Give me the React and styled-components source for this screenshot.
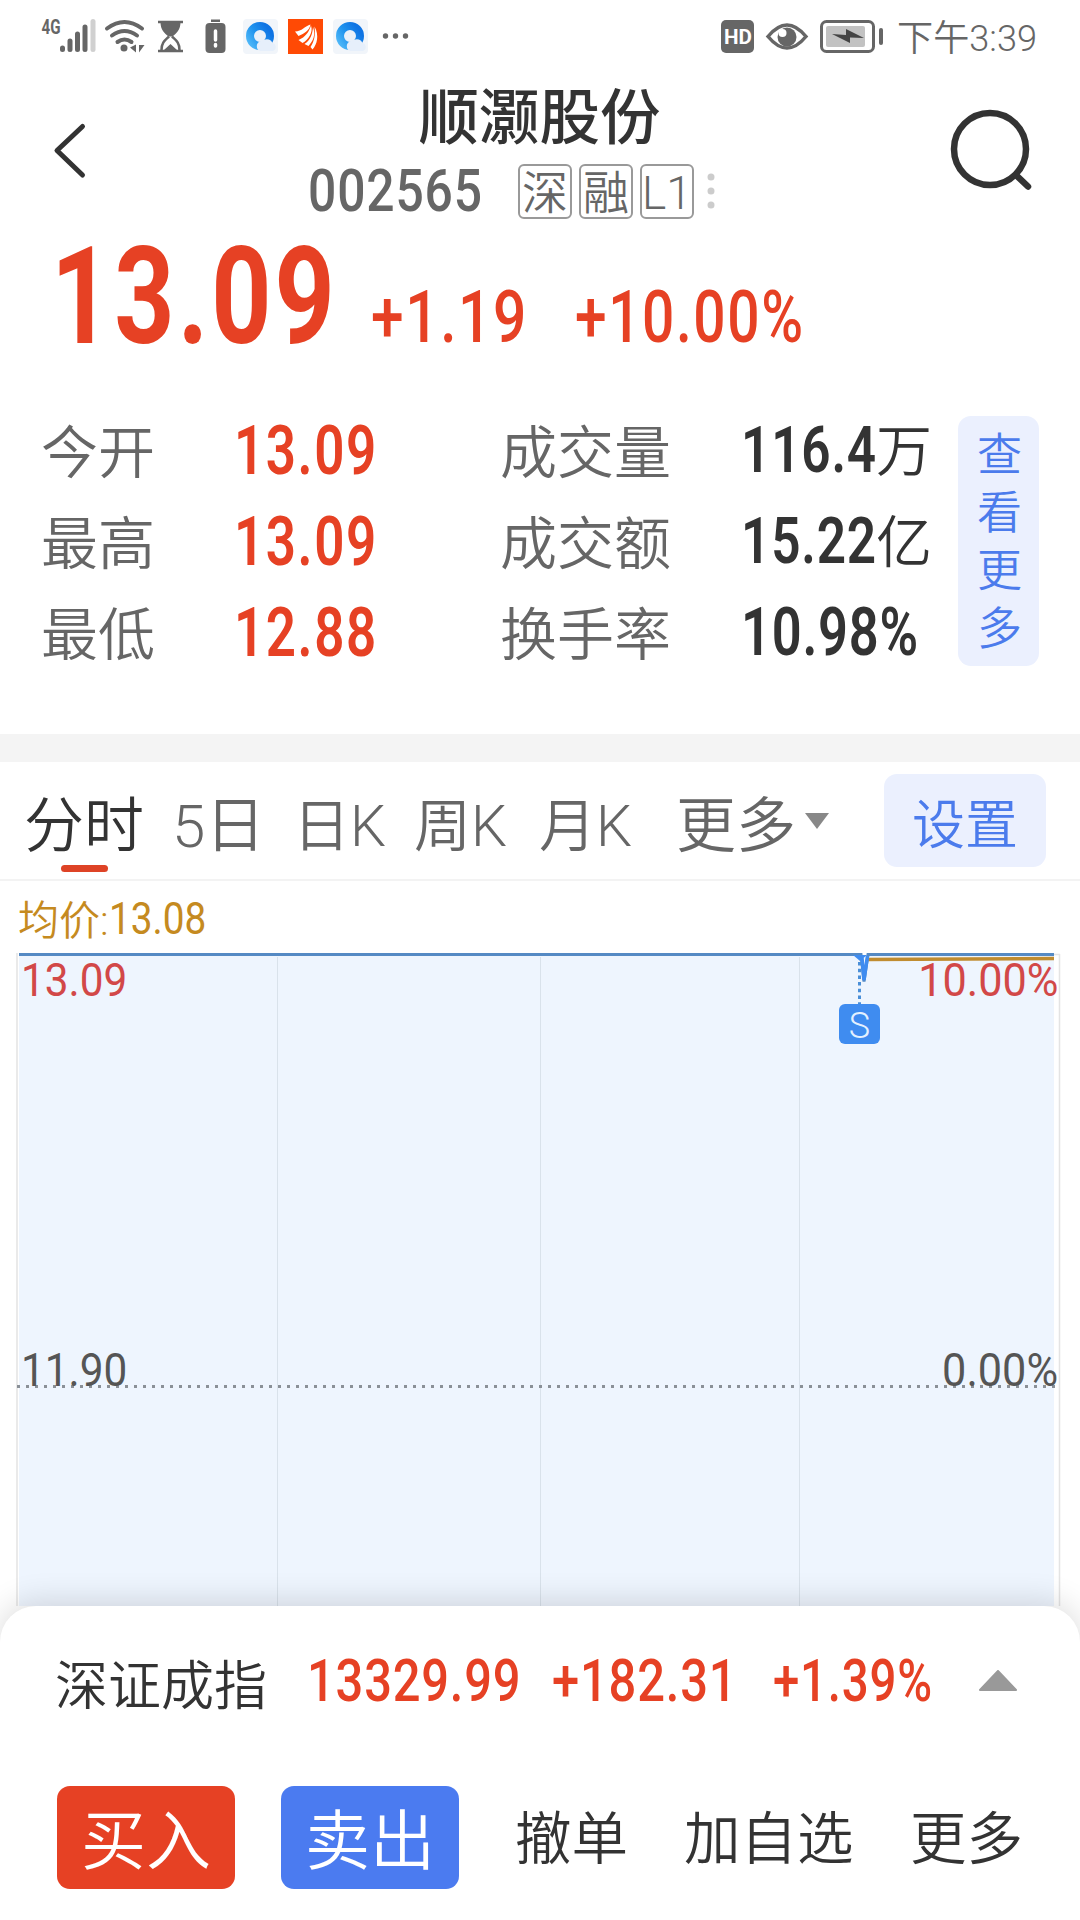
import React from 'react';
import styled, { createGlobalStyle } from 'styled-components';

const GlobalStyle = createGlobalStyle`
    * {
        box-sizing: border-box;
    }
    body {
        margin: 0;
        background: #fff;
        font-family: Roboto, 'Noto Sans CJK SC', sans-serif;
        font-weight: 350;
        color: #333;
    }
`;

const Screen = styled.div`
    width: 1080px;
    height: 1920px;
    display: flex;
    flex-direction: column;
    overflow: hidden;
    background: #fff;
`;

// 숫자 : 좁은 폭
const NumBox = styled.span`
    display: block;
    flex: none;
    width: ${(p) => p.$w}px;
    height: ${(p) => p.$size}px;
    line-height: ${(p) => p.$size}px;
    font-size: ${(p) => p.$size}px;
    font-weight: ${(p) => p.$weight || 500};
    color: ${(p) => p.$color || '#e64124'};
    white-space: nowrap;
`;

const NumText = styled.span`
    display: inline-block;
    transform: scaleX(${(p) => p.$sx || 0.8});
    transform-origin: left center;
    letter-spacing: ${(p) => p.$ls || 0}px;
`;

const Num = ({ children, sx, ls, w, size, weight, color }) => (
    <NumBox $w={w} $size={size} $weight={weight} $color={color}>
        <NumText $sx={sx} $ls={ls}>{children}</NumText>
    </NumBox>
);

const StatusBar = styled.div`
    height: 72px;
    padding: 0 42px 0 41px;
    display: flex;
    justify-content: space-between;
    align-items: center;
`;

const Header = styled.div`
    height: 155px;
    padding: 0 46px 0 52px;
    display: flex;
    justify-content: space-between;
`;

const HeaderCenter = styled.div`
    display: flex;
    flex-direction: column;
    align-items: center;
    margin-left: -7px;
`;

const StockName = styled.div`
    height: 88px;
    padding: 3px 0 0 50px;
    line-height: 88px;
    font-size: 60.500px;
    font-weight: 500;
`;

const CodeRow = styled.div`
    display: flex;
    align-items: center;
    height: 62px;
`;

const Tag = styled.span`
    width: 54px;
    height: 55px;
    margin-right: 7px;
    border: 2px solid #999;
    border-radius: 6px;
    line-height: 54px;
    font-size: 46px;
    color: #666;
    display: flex;
    justify-content: center;
`;

const Quote = styled.div`
    height: 187px;
    padding: 2px 0 0 51px;
    display: flex;
    align-items: flex-start;
`;

const Change = styled.div`
    display: flex;
    padding-top: 53px;
`;

const Stats = styled.div`
    height: 320px;
    padding: 2px 41px 0 41px;
    display: flex;
    align-items: flex-start;
`;

const StatGrid = styled.div`
    flex: 1;
    display: grid;
    grid-template-columns: 193px 266px 241px 1fr;
    grid-auto-rows: 91px;
    align-items: center;
    margin-top: -11px;
`;

const StatLabel = styled.div`
    padding-top: 7px;
    font-size: 57px;
    line-height: 70px;
    color: #666;
    white-space: nowrap;
`;

const StatValue = styled.div`
    display: flex;
    align-items: center;
`;

const Unit = styled.span`
    padding-top: 3px;
    font-size: 56px;
    line-height: 64px;
`;

const MoreButton = styled.div`
    width: 81px;
    height: 250px;
    border-radius: 13px;
    background: #ebf0fe;
    color: #4b7bec;
    font-size: 45px;
    line-height: 58px;
    padding: 11px 17px 0 19px;
    text-align: center;
`;

const Divider = styled.div`
    height: 28px;
    background: #f4f4f4;
`;

const Tabs = styled.div`
    height: 119px;
    padding: 0 34px 0 24px;
    border-bottom: 2px solid #f3f3f3;
    display: flex;
    align-items: center;
`;

const Tab = styled.div`
    flex: none;
    width: ${(p) => p.$w}px;
    height: 117px;
    padding-top: 24px;
    line-height: 82px;
    font-size: ${(p) => p.$size || 57}px;
    color: ${(p) => (p.$active ? '#333' : '#666')};
    white-space: nowrap;
    display: flex;
    flex-wrap: wrap;
    align-content: flex-start;
`;

const Underline = styled.i`
    width: 47px;
    height: 7px;
    margin: -3px 0 0 37px;
    border-radius: 4px;
    background: #de4326;
`;

const Setting = styled.div`
    width: 162px;
    height: 93px;
    margin-left: auto;
    border-radius: 13px;
    background: #ebf0fe;
    color: #4b7bec;
    font-size: 53px;
    line-height: 105px;
    text-align: center;
`;

const Average = styled.div`
    height: 72px;
    padding-left: 18px;
    display: flex;
    align-items: center;
    font-size: 41px;
    color: #c58a20;

    ${NumBox} {
        margin-top: 4px;
    }
`;

const Chart = styled.div`
    position: relative;
    height: 653px;

    svg {
        display: block;
    }
`;

const ChartLabel = styled.div`
    position: absolute;
    top: ${(p) => p.$top}px;
    ${(p) => (p.$right ? 'right: 22px;' : 'left: 21px;')}
    font-size: 47px;
    font-weight: 400;
    line-height: 52px;
    color: ${(p) => p.$color};
    transform: scaleX(${(p) => (p.$right ? 0.92 : 0.9)});
    transform-origin: ${(p) => (p.$right ? 'right' : 'left')};
`;

const SellMark = styled.div`
    position: absolute;
    left: 839px;
    top: 51px;
    width: 41px;
    height: 40px;
    border-radius: 6px;
    background: #3f8cf0;
    color: #e4f1ff;
    font-size: 36px;
    line-height: 44px;
    text-align: center;
`;

const Sheet = styled.div`
    position: relative;
    flex: 1;
    border-radius: 36px 36px 0 0;
    background: #fff;
    box-shadow: 0 -4px 32px rgba(0, 0, 0, 0.14);
`;

const IndexRow = styled.div`
    height: 176px;
    padding: 0 59px 27px 55px;
    display: flex;
    align-items: center;
`;

const IndexName = styled.div`
    width: 252px;
    font-size: 53px;
    padding-top: 3px;
`;

const Actions = styled.div`
    display: flex;
    align-items: center;
    padding-left: 57px;
    height: 110px;
`;

const TradeButton = styled.div`
    width: 178px;
    height: 103px;
    margin-right: 46px;
    border-radius: 13px;
    background: ${(p) => p.$bg};
    color: #fff;
    font-size: 65px;
    line-height: 113px;
    text-align: center;
`;

const Action = styled.div`
    width: ${(p) => p.$w}px;
    margin-left: ${(p) => p.$ml || 0}px;
    font-size: 56.500px;
    line-height: 80px;
    padding-top: 6px;
    white-space: nowrap;
`;

const stats = [
    ['今开', '13.09', '成交量', '116.4', '万'],
    ['最高', '13.09', '成交额', '15.22', '亿'],
    ['最低', '12.88', '换手率', '10.98%', ''],
];

const Browser = ({ x }) => (
    <g transform={`translate(${x} 19)`}>
        <rect width="35" height="35" rx="4" fill="#f1f5fa" />
        <circle cx="17" cy="17" r="10" fill="#e9f0f9" stroke="url(#ring)" strokeWidth="8" />
        <path d="M17.500 32a5 5 0 0 1-.5-9.500a4.500 4.500 0 0 1 4-1.500a6 6 0 0 1 8.500 3a4.200 4.200 0 0 1 .5 8z" fill="#e6effb" />
    </g>
);

const StatusLeft = () => (
    <svg width="380" height="72" viewBox="41 0 380 72">
        <defs>
            <linearGradient id="ring" x1="0" y1="1" x2="1" y2="0.300">
                <stop offset="0" stopColor="#4fb8f8" />
                <stop offset="0.500" stopColor="#1f93ee" />
                <stop offset="1" stopColor="#0f74e4" />
            </linearGradient>
        </defs>
        <text x="41.500" y="33.500" fontSize="20" fontWeight="700" fill="#666" textLength="19" lengthAdjust="spacingAndGlyphs">4G</text>
        <g stroke="#666" strokeWidth="5" strokeLinecap="round">
            <path d="M62.500 48v1.500M70 41v8.500M77.500 34v15.500M85 27v22.500" />
            <path d="M93 21.500v28" stroke="#d0d0d0" />
        </g>
        <g fill="none" stroke="#666" strokeWidth="4" strokeLinecap="round">
            <path d="M107 28.500q17.500-13 35 0M112 35.500q12.500-9 25 0M117.500 42q7-5 14 0" />
        </g>
        <circle cx="124" cy="48" r="3.500" fill="#666" />
        <path d="M136 44.500v8l-6-5zM139 45v7.500l5.500-7.500z" fill="#666" />
        <g fill="none" stroke="#666" strokeWidth="2.500">
            <path d="M158 22h25M158 51h25M161.500 50c0-8 4-10 7.500-13.500M179.500 50c0-8-4-10-7.500-13.500" />
        </g>
        <path d="M160.500 22h20c0 8-4 11-8 14.500h-4c-4-3.500-8-6.500-8-14.500zM164 50l6.500-6 6.500 6z" fill="#666" />
        <rect x="211" y="19.500" width="9" height="2.500" fill="#666" />
        <rect x="205.500" y="23" width="20" height="30" rx="4" fill="#666" />
        <path d="M215.500 31v9M215.500 44.500v1.500" stroke="#fff" strokeWidth="3.500" strokeLinecap="round" />
        <Browser x={243} />
        <rect x="288" y="19" width="35" height="35" fill="#ff4a05" />
        <g fill="#fff">
            <path d="M295 31.500c7 0 10-5.500 15.500-7c-1 6-6 9-12 11.500z" />
            <path d="M298.500 40c7-3 10.500-8 12.500-14.500c2.500 7-3 14.500-8.500 17.500z" />
            <path d="M304.500 44c6-4 8-10 8.500-17c3 8 0 14-4.500 19z" />
            <path d="M310.500 47c4-6 5-12 4-20.500c5 9 2.500 18-2 23z" />
        </g>
        <Browser x={333} />
        <g fill="#666">
            <circle cx="385.500" cy="36" r="2.700" />
            <circle cx="395.500" cy="36" r="2.700" />
            <circle cx="405.500" cy="36" r="2.700" />
        </g>
    </svg>
);

const StatusRight = () => (
    <svg width="320" height="72" viewBox="718 0 320 72">
        <rect x="721" y="20" width="33" height="33" rx="5" fill="#666" />
        <text x="724" y="44" fontSize="21" fontWeight="700" fill="#fff" textLength="28" lengthAdjust="spacingAndGlyphs">HD</text>
        <path d="M768 36.500q19-23 38 0q-19 23-38 0z" fill="none" stroke="#666" strokeWidth="3.500" />
        <circle cx="787" cy="37" r="9.500" fill="#666" />
        <circle cx="782.500" cy="33" r="4" fill="#fff" />
        <rect x="821.500" y="21.500" width="52" height="30" rx="5" fill="none" stroke="#666" strokeWidth="3" />
        <rect x="826" y="26" width="39" height="21" rx="2" fill="#c2c2c2" />
        <path d="M832 34l14 1v-6l18 9-14-.5v5.500z" fill="#444" />
        <rect x="879" y="28" width="4" height="17" rx="2" fill="#666" />
        <text x="897" y="50.500" fontSize="36" fontWeight="350" fill="#666" textLength="140" lengthAdjust="spacingAndGlyphs">下午3:39</text>
    </svg>
);

function App() {
    return (
        <>
            <GlobalStyle />
            <Screen>
                <StatusBar>
                    <StatusLeft />
                    <StatusRight />
                </StatusBar>

                <Header>
                    <svg width="40" height="155" viewBox="52 72 40 155">
                        <path d="M82.500 126.500L57 150.500L82.500 175" fill="none" stroke="#333" strokeWidth="5" strokeLinecap="round" strokeLinejoin="round" />
                    </svg>
                    <HeaderCenter>
                        <StockName>顺灏股份</StockName>
                        <CodeRow>
                            <Num size={60} w={210} sx={0.83} ls={1} weight={500} color="#666">002565</Num>
                            <Tag>深</Tag>
                            <Tag>融</Tag>
                            <Tag>L1</Tag>
                            <svg width="20" height="40" fill="#ccc">
                                <circle cx="10" cy="6" r="3.500" />
                                <circle cx="10" cy="20" r="3.500" />
                                <circle cx="10" cy="34" r="3.500" />
                            </svg>
                        </CodeRow>
                    </HeaderCenter>
                    <svg width="90" height="155" viewBox="944 72 90 155">
                        <ellipse cx="990" cy="149" rx="36" ry="36" fill="none" stroke="#333" strokeWidth="6.500" />
                        <path d="M1016 175l12 11.500" stroke="#333" strokeWidth="6.500" strokeLinecap="round" />
                    </svg>
                </Header>

                <Quote>
                    <Num size={136} w={320} sx={0.772} ls={4} weight={700}>13.09</Num>
                    <Change>
                        <Num size={72} w={204} sx={0.815} ls={2}>+1.19</Num>
                        <Num size={72} w={240} sx={0.79} ls={2}>+10.00%</Num>
                    </Change>
                </Quote>

                <Stats>
                    <StatGrid>
                        {stats.map(([a, b, c, d, unit]) => (
                            <React.Fragment key={a}>
                                <StatLabel>{a}</StatLabel>
                                <Num size={68} w={160} sx={0.778} ls={2} weight={600}>{b}</Num>
                                <StatLabel>{c}</StatLabel>
                                <StatValue>
                                    <Num
                                        size={unit ? 64 : 67}
                                        w={unit ? 135 : 180}
                                        sx={unit ? 0.802 : 0.782}
                                        ls={1}
                                        weight={600}
                                        color="#333"
                                    >
                                        {d}
                                    </Num>
                                    {unit && <Unit>{unit}</Unit>}
                                </StatValue>
                            </React.Fragment>
                        ))}
                    </StatGrid>
                    <MoreButton>查看更多</MoreButton>
                </Stats>

                <Divider />

                <Tabs>
                    <Tab $w={148} $size={60} $active>
                        分时
                        <Underline />
                    </Tab>
                    <Tab $w={121} $size={60}>5日</Tab>
                    <Tab $w={121}>日K</Tab>
                    <Tab $w={125}>周K</Tab>
                    <Tab $w={137}>月K</Tab>
                    <Tab $w={128} $size={60}>更多</Tab>
                    <svg width="26" height="18">
                        <path d="M1 1h24L13 17z" fill="#888" />
                    </svg>
                    <Setting>设置</Setting>
                </Tabs>

                <Average>
                    均价:
                    <Num size={44} w={110} sx={0.88} weight={400} color="#c58a20">13.08</Num>
                </Average>

                <Chart>
                    <svg width="1080" height="653" viewBox="0 953 1080 653">
                        <rect x="19" y="955" width="1035" height="651" fill="#eef5fe" />
                        <path d="M17 953v653M1059.500 954v652M1054 954.500h6" stroke="#e4e4e4" strokeWidth="1.500" />
                        <path d="M277.500 957v649M540.500 957v649M799.500 957v649" stroke="#d9e2eb" />
                        <path d="M17 1386.500h1042" stroke="#8a9097" strokeWidth="3" strokeDasharray="3 6" />
                        <path d="M866 959.500L1054 958.500" stroke="#c08c30" strokeWidth="3.500" />
                        <path d="M19 954.500h842l3 27 4-27h186" fill="none" stroke="#558ac4" strokeWidth="3" />
                        <path d="M862 958l2 22 3.500-24" fill="none" stroke="#3f8cf0" strokeWidth="3.500" />
                        <path d="M853 955h14l-7 6z" fill="#3f8cf0" />
                        <path d="M859.500 962v42" stroke="#4a8fd8" strokeWidth="3" strokeDasharray="3.500 3.200" />
                    </svg>
                    <ChartLabel $top={1} $color="#d24848">13.09</ChartLabel>
                    <ChartLabel $top={1} $color="#d24848" $right>10.00%</ChartLabel>
                    <ChartLabel $top={391} $color="#555">11.90</ChartLabel>
                    <ChartLabel $top={391} $color="#555" $right>0.00%</ChartLabel>
                    <SellMark>S</SellMark>
                </Chart>

                <Sheet>
                    <IndexRow>
                        <IndexName>深证成指</IndexName>
                        <Num size={60} w={245} sx={0.814} ls={1}>13329.99</Num>
                        <Num size={60} w={221} sx={0.815} ls={1}>+182.31</Num>
                        <Num size={60} w={205} sx={0.79} ls={1}>+1.39%</Num>
                        <svg width="40" height="22">
                            <path d="M20 1L38 20H2z" fill="#999" stroke="#999" strokeWidth="2" strokeLinejoin="round" />
                        </svg>
                    </IndexRow>
                    <Actions>
                        <TradeButton $bg="#e64124">买入</TradeButton>
                        <TradeButton $bg="#4b7bf0">卖出</TradeButton>
                        <Action $w={169} $ml={10}>撤单</Action>
                        <Action $w={226}>加自选</Action>
                        <Action $w={120}>更多</Action>
                    </Actions>
                </Sheet>
            </Screen>
        </>
    );
}

export default App;
